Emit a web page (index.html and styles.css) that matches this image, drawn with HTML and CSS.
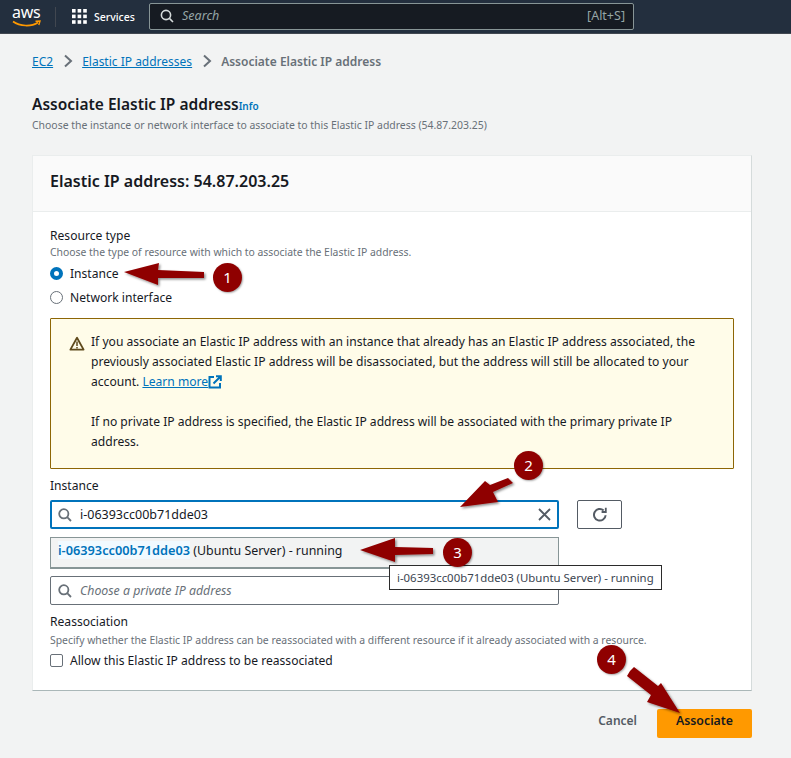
FILE: index.html
```html
<!DOCTYPE html>
<html lang="en">
<head>
    <meta charset="UTF-8">
    <meta name="viewport" content="width=device-width, initial-scale=1.0">
    <title>Associate Elastic IP address</title>
    <link rel="stylesheet" href="styles.css">
</head>
<body>

    <header class="topbar">
        <div class="logo">
            <span class="logo-text">aws</span>
            <svg class="logo-smile" width="30" height="8" viewBox="0 0 30 8">
                <path d="M1 1.5C8 6.5 19 7 26 2.5" fill="none" stroke="#ff9900" stroke-width="1.6"/>
                <path d="M23.5 1.2L28 1L26.8 5" fill="none" stroke="#ff9900" stroke-width="1.4"/>
            </svg>
        </div>
        <div class="topbar-sep"></div>
        <svg class="grid-icon" width="15" height="15" viewBox="0 0 15 15" fill="#fff">
            <rect x="0" y="0" width="3.6" height="3.6"/><rect x="5.6" y="0" width="3.6" height="3.6"/><rect x="11.2" y="0" width="3.6" height="3.6"/>
            <rect x="0" y="5.6" width="3.6" height="3.6"/><rect x="5.6" y="5.6" width="3.6" height="3.6"/><rect x="11.2" y="5.6" width="3.6" height="3.6"/>
            <rect x="0" y="11.2" width="3.6" height="3.6"/><rect x="5.6" y="11.2" width="3.6" height="3.6"/><rect x="11.2" y="11.2" width="3.6" height="3.6"/>
        </svg>
        <span class="services">Services</span>
        <div class="topsearch">
            <svg width="14" height="14" viewBox="0 0 14 14" fill="none" stroke="#d5dbdb" stroke-width="1.6">
                <circle cx="6" cy="6" r="4.6"/><path d="M9.4 9.4L13 13"/>
            </svg>
            <span class="topsearch-text">Search</span>
            <span class="topsearch-key">[Alt+S]</span>
        </div>
    </header>

    <main class="content">
        <nav class="crumbs">
            <a href="#">EC2</a>
            <svg class="crumb-sep" width="10" height="14" viewBox="0 0 10 14" fill="none" stroke="#687078" stroke-width="2"><path d="M2 1.5L8 7L2 12.5"/></svg>
            <a href="#">Elastic IP addresses</a>
            <svg class="crumb-sep" width="10" height="14" viewBox="0 0 10 14" fill="none" stroke="#687078" stroke-width="2"><path d="M2 1.5L8 7L2 12.5"/></svg>
            <span class="crumb-current">Associate Elastic IP address</span>
        </nav>

        <h1 class="page-title">Associate Elastic IP address<span class="info">Info</span></h1>
        <p class="page-desc">Choose the instance or network interface to associate to this Elastic IP address (54.87.203.25)</p>

        <section class="card">
            <h2 class="card-head">Elastic IP address: 54.87.203.25</h2>
            <div class="card-body">
                <div class="label">Resource type</div>
                <div class="hint">Choose the type of resource with which to associate the Elastic IP address.</div>
                <div class="radio-row"><span class="radio radio-on"></span>Instance</div>
                <div class="radio-row"><span class="radio"></span>Network interface</div>

                <div class="alert">
                    <svg class="alert-icon" width="16" height="15" viewBox="0 0 16 15" fill="none" stroke="#5f4a1c" stroke-width="1.8">
                        <path d="M8 1.8L1.4 13.6H14.6Z" stroke-linejoin="round"/>
                        <path d="M8 5.5V10M8 11V12.6" stroke-width="1.5"/>
                    </svg>
                    <div class="alert-text">
                        <p>If you associate an Elastic IP address with an instance that already has an Elastic IP address associated, the previously associated Elastic IP address will be disassociated, but the address will still be allocated to your account. <a href="#">Learn more</a><svg class="ext-icon" width="14" height="14" viewBox="0 0 14 14" fill="none" stroke="#0073bb" stroke-width="2"><path d="M6 2H1.5V12.5H12V8"/><path d="M5.5 8.5L12.5 1.5M8 1.2H12.8V6"/></svg></p>
                        <p>If no private IP address is specified, the Elastic IP address will be associated with the primary private IP address.</p>
                    </div>
                </div>

                <div class="label label-instance">Instance</div>
                <div class="select-row">
                    <div class="input input-focus">
                        <svg class="search-icon" width="14" height="14" viewBox="0 0 14 14" fill="none" stroke="#687078" stroke-width="1.8"><circle cx="5.8" cy="5.8" r="4.6"/><path d="M9.2 9.2L13 13"/></svg>
                        <span class="input-value">i-06393cc00b71dde03</span>
                        <svg class="clear-icon" width="13" height="13" viewBox="0 0 13 13" fill="none" stroke="#545b64" stroke-width="1.8"><path d="M1 1L12 12M12 1L1 12"/></svg>
                    </div>
                    <button class="refresh" type="button">
                        <svg width="16" height="16" viewBox="0 0 16 16" fill="none" stroke="#545b64" stroke-width="2"><path d="M13.6 8.2A5.8 5.8 0 1 1 11.6 3.4"/><path d="M13.8 0.8V5H9.6" stroke-width="1.8"/></svg>
                    </button>
                </div>

                <div class="input input-private">
                    <svg class="search-icon" width="14" height="14" viewBox="0 0 14 14" fill="none" stroke="#687078" stroke-width="1.8"><circle cx="5.8" cy="5.8" r="4.6"/><path d="M9.2 9.2L13 13"/></svg>
                    <span class="input-placeholder">Choose a private IP address</span>
                </div>

                <div class="label label-reassoc">Reassociation</div>
                <div class="hint hint-reassoc">Specify whether the Elastic IP address can be reassociated with a different resource if it already associated with a resource.</div>
                <div class="check-row"><span class="checkbox"></span>Allow this Elastic IP address to be reassociated</div>
            </div>
        </section>

        <div class="actions">
            <a class="cancel" href="#">Cancel</a>
            <button class="primary" type="button">Associate</button>
        </div>
    </main>

    <!-- dropdown and tooltip sit on top of the form -->
    <div class="dropdown"><span class="match">i-06393cc00b71dde03</span> (Ubuntu Server) - running</div>
    <div class="tooltip">i-06393cc00b71dde03 (Ubuntu Server) - running</div>

    <!-- screenshot annotations -->
    <svg class="arrows" width="791" height="758" viewBox="0 0 791 758">
        <defs>
            <filter id="soft" x="-20%" y="-20%" width="150%" height="150%">
                <feDropShadow dx="1.5" dy="1.5" stdDeviation="1.2" flood-color="#000" flood-opacity="0.45"/>
            </filter>
        </defs>
        <g fill="#8f0000" filter="url(#soft)">
            <polygon points="124,272 159,263 158,270 204,272 204,278 158,278 158,285"/>
            <polygon points="460,507 485,481 490,485 508,478 513,483 493,492 498,502"/>
            <polygon points="360,550 395,538 395,547 433,548 433,554 395,555 395,562"/>
            <polygon points="630,671 634,667 658,686 661,683 680,713 647,702 651,695 627,676"/>
        </g>
    </svg>
    <div class="step step-1">1</div>
    <div class="step step-2">2</div>
    <div class="step step-3">3</div>
    <div class="step step-4">4</div>

</body>
</html>
```

FILE: styles.css
```css
* {
    box-sizing: border-box;
}
body {
    margin: 0;
    height: 758px;
    overflow: hidden;
    position: relative;
    background: #f2f3f3;
    color: #16191f;
    font-family: "Noto Sans", "Open Sans", sans-serif;
    font-size: 12px;
}
a {
    color: #0073bb;
}

/* top bar */
.topbar {
    height: 34px;
    background: #232f3e;
    border-bottom: 1px solid #414750;
    display: flex;
    align-items: center;
    padding-left: 12px;
}
.logo {
    width: 30px;
    height: 28px;
    position: relative;
    color: #fff;
}
.logo-text {
    display: block;
    font-size: 16px;
    line-height: 20px;
    letter-spacing: -0.3px;
    margin-top: -1px;
}
.logo-smile {
    position: absolute;
    left: 0;
    top: 17px;
}
.topbar-sep {
    width: 1px;
    height: 20px;
    background: #414750;
    margin-left: 13px;
}
.grid-icon {
    margin-left: 16px;
}
.services {
    margin-left: 7px;
    color: #fff;
    font-size: 10.5px;
    font-weight: 500;
    width: 42px;
}
.topsearch {
    margin-left: 13px;
    width: 485px;
    height: 27px;
    background: #161b22;
    border: 1px solid #879596;
    border-radius: 2px;
    display: flex;
    align-items: center;
    padding: 0 8px 2px 10px;
}
.topsearch-text {
    margin-left: 8px;
    color: #95a5a6;
    font-style: italic;
    font-size: 12.5px;
    flex: 1;
}
.topsearch-key {
    color: #95a5a6;
    font-size: 12.5px;
}

/* page */
.content {
    padding: 0 39px 0 32px;
}
.crumbs {
    display: flex;
    align-items: center;
    height: 20px;
    margin-top: 17px;
    font-size: 12px;
}
.crumb-sep {
    margin: 0 9px 0 10px;
}
.crumb-current {
    color: #687078;
    font-weight: 600;
}
.page-title {
    margin: 23px 0 0;
    font-size: 15.5px;
    line-height: 20px;
    font-weight: 600;
}
.info {
    color: #0073bb;
    font-size: 10px;
    font-weight: 600;
}
.page-desc {
    margin: 1px 0 0;
    font-size: 10.45px;
    line-height: 16px;
    color: #687078;
}

/* card */
.card {
    margin-top: 22px;
    height: 536px;
    background: #fff;
    border: 1px solid #eaeded;
    border-bottom-color: #aab7b8;
    border-right-color: #d5dbdb;
}
.card-head {
    margin: 0;
    height: 56px;
    padding: 0 17px;
    background: #fafafa;
    border-bottom: 1px solid #eaeded;
    font-size: 16px;
    font-weight: 600;
    line-height: 51px;
}
.card-body {
    padding: 16px 17px 0;
}
.label {
    font-size: 12.1px;
    line-height: 16px;
}
.hint {
    font-size: 10.4px;
    line-height: 16px;
    color: #687078;
}
.radio-row {
    display: flex;
    align-items: center;
    height: 24px;
    margin-top: 1px;
    font-size: 12.1px;
}
.radio-row + .radio-row {
    margin-top: 0;
}
.radio {
    width: 13px;
    height: 13px;
    border: 1px solid #687078;
    border-radius: 50%;
    margin-right: 7px;
}
.radio-on {
    border: 4px solid #0073bb;
}
.alert {
    margin-top: 9px;
    width: 684px;
    height: 151px;
    background: #fffce9;
    border: 1px solid #8d6605;
    border-radius: 1px;
    display: flex;
    padding: 13px 0 0 18px;
}
.alert-icon {
    flex: none;
    margin: 4px 6px 0 0;
}
.alert-text {
    width: 615px;
    font-size: 12.1px;
    line-height: 20px;
}
.alert-text p {
    margin: 0 0 20px;
}
.ext-icon {
    vertical-align: -3px;
}
.label-instance {
    margin-top: 9px;
}
.select-row {
    display: flex;
    margin-top: 6px;
}
.input {
    width: 509px;
    height: 29px;
    background: #fff;
    border: 1px solid #687078;
    border-radius: 2px;
    display: flex;
    align-items: center;
    padding: 0 7px;
    font-size: 12.5px;
}
.input-focus {
    border: 2px solid #0073bb;
    padding: 0 6px;
}
.search-icon {
    flex: none;
}
.input-value {
    margin-left: 8px;
    flex: 1;
}
.input-placeholder {
    margin-left: 8px;
    color: #687078;
    font-style: italic;
    font-size: 12.35px;
}
.refresh {
    margin-left: 18px;
    width: 45px;
    height: 29px;
    background: #fff;
    border: 1px solid #545b64;
    border-radius: 2px;
    padding: 0;
    display: flex;
    align-items: center;
    justify-content: center;
}
.input-private {
    margin-top: 47px;
}
.label-reassoc {
    margin-top: 9px;
}
.hint-reassoc {
    margin-top: 2px;
}
.check-row {
    display: flex;
    align-items: center;
    height: 20px;
    margin-top: 2px;
    font-size: 12.1px;
}
.checkbox {
    width: 13px;
    height: 13px;
    border: 1px solid #687078;
    border-radius: 2px;
    margin-right: 7px;
}

/* footer buttons */
.actions {
    display: flex;
    justify-content: flex-end;
    align-items: center;
    margin-top: 18px;
    height: 29px;
}
.cancel {
    color: #545b64;
    font-weight: 600;
    font-size: 12px;
    text-decoration: none;
    margin: 0 20px 6px 0;
}
.primary {
    width: 95px;
    height: 29px;
    background: #ff9900;
    border: 0;
    border-radius: 2px;
    color: #16191f;
    font-family: inherit;
    font-size: 12.3px;
    font-weight: 600;
    padding: 0 0 6px;
}

/* overlays */
.dropdown {
    position: absolute;
    left: 50px;
    top: 537px;
    width: 509px;
    height: 32px;
    background: #f2f3f3;
    border: 1px solid #879596;
    border-bottom-width: 2px;
    padding-left: 7px;
    font-size: 12.4px;
    line-height: 25px;
    color: #16191f;
}
.match {
    color: #0073bb;
    font-weight: 600;
    font-size: 12.75px;
    background: #f1faff;
}
.tooltip {
    position: absolute;
    left: 389px;
    top: 565px;
    width: 273px;
    height: 25px;
    background: #fff;
    border: 1px solid #2b2b2b;
    padding-left: 7px;
    font-size: 11.4px;
    line-height: 23px;
    color: #3a4450;
}
.arrows {
    position: absolute;
    left: 0;
    top: 0;
}
.step {
    position: absolute;
    width: 29px;
    height: 29px;
    border-radius: 50%;
    background: #8f0000;
    color: #fff;
    font-size: 15px;
    line-height: 29px;
    text-align: center;
    box-shadow: 1px 1px 2px rgba(0, 0, 0, 0.35);
}
.step-1 { left: 213px; top: 263px; }
.step-2 { left: 514px; top: 451px; }
.step-3 { left: 443px; top: 538px; }
.step-4 { left: 597px; top: 645px; }
```
